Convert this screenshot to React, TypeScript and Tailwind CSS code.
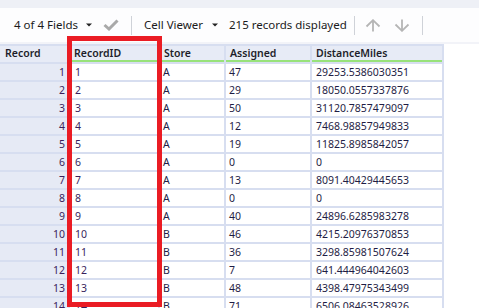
import React from "react";

const rows: [string, string, string, string][] = [
  ["1", "A", "47", "29253.5386030351"],
  ["2", "A", "29", "18050.0557337876"],
  ["3", "A", "50", "31120.7857479097"],
  ["4", "A", "12", "7468.98857949833"],
  ["5", "A", "19", "11825.8985842057"],
  ["6", "A", "0", "0"],
  ["7", "A", "13", "8091.40429445653"],
  ["8", "A", "0", "0"],
  ["9", "A", "40", "24896.6285983278"],
  ["10", "B", "46", "4215.20976370853"],
  ["11", "B", "36", "3298.85981507624"],
  ["12", "B", "7", "641.444964042603"],
  ["13", "B", "48", "4398.47975343499"],
  ["14", "B", "71", "6506.08463528926"],
];

function Caret() {
  return (
    <svg width="6" height="4" viewBox="0 0 6 4" className="shrink-0">
      <path d="M0 0.5 L6 0.5 L3 3.5 Z" fill="#222" />
    </svg>
  );
}

function Sep() {
  return <div className="w-px h-[19px] bg-[#cfd2d8] shrink-0" />;
}

export default function App() {
  const gridCols = "grid grid-cols-[68px_88px_64px_84px_130px] gap-x-[2px]";
  return (
    <div
      className="relative w-[479px] h-[308px] overflow-hidden bg-white"
      style={{ fontFamily: '"Noto Sans", "Open Sans", sans-serif' }}
    >
      <div className="h-[8px] bg-[#eef0f6]" />
      {/* toolbar */}
      <div className="h-[34px] flex items-center bg-[#fdfdfe] text-[11.5px] text-[#1b1b1b]">
        <span className="ml-[14px] w-[72px] whitespace-nowrap">4 of 4 Fields</span>
        <Caret />
        <svg width="16" height="12" viewBox="0 0 16 12" className="ml-[11px] shrink-0">
          <path d="M1.5 6 L6 10 L14.5 1.5" fill="none" stroke="#a9a9a9" strokeWidth="3" />
        </svg>
        <div className="ml-[12px]">
          <Sep />
        </div>
        <span className="ml-[12px] w-[68px] whitespace-nowrap">Cell Viewer</span>
        <Caret />
        <span className="ml-[11px] w-[113px] whitespace-nowrap">215 records displayed</span>
        <div className="ml-[12px]">
          <Sep />
        </div>
        <svg width="16" height="13" viewBox="0 0 16 13" className="ml-[10px] shrink-0">
          <path d="M8 12.5 L8 1.5 M1.5 7.5 L8 1.2 L14.5 7.5" fill="none" stroke="#b5b5b5" strokeWidth="1.8" />
        </svg>
        <svg width="16" height="13" viewBox="0 0 16 13" className="ml-[13px] shrink-0">
          <path d="M8 0.5 L8 11.5 M1.5 5.5 L8 11.8 L14.5 5.5" fill="none" stroke="#b5b5b5" strokeWidth="1.8" />
        </svg>
        <div className="ml-[12px]">
          <Sep />
        </div>
      </div>
      <div className="h-[2px] bg-[#f2f3f8]" />
      {/* table */}
      <div
        className="w-[444px] bg-[#d7def0] pt-[2px] pr-[2px] flex flex-col gap-y-[2px] text-[10.5px]"
      >
        <div className={`${gridCols} h-[16px]`}>
          <div className="bg-[#e7ebf6] pl-[5px] font-semibold text-[#1e1e2a] leading-[14px]">Record</div>
          {["RecordID", "Store", "Assigned", "DistanceMiles"].map((h) => (
            <div
              key={h}
              className="bg-[#e7ebf6] border-b-2 border-[#98e27a] pl-[4px] font-semibold text-[#1e1e2a] leading-[14px]"
            >
              {h}
            </div>
          ))}
        </div>
        {rows.map((r) => (
          <div key={r[0]} className={`${gridCols} h-[16px]`}>
            <div className="bg-[#e6eaf5] pr-[3px] text-right text-[#3a1f5c] leading-[16px]">{r[0]}</div>
            <div className="bg-white pl-[5px] text-[#3a1f5c] leading-[16px]">{r[0]}</div>
            <div className="bg-white pl-[3px] text-[#1f1d45] leading-[16px]">{r[1]}</div>
            <div className="bg-white pl-[3px] text-[#1f1d45] leading-[16px]">{r[2]}</div>
            <div className="bg-white pl-[4px] text-[#1f1d45] leading-[16px]">{r[3]}</div>
          </div>
        ))}
      </div>
      {/* red highlight box */}
      <div className="absolute left-[67px] top-[36px] w-[95px] h-[271px] border-[5px] border-[#ea1c24] pointer-events-none" />
    </div>
  );
}
